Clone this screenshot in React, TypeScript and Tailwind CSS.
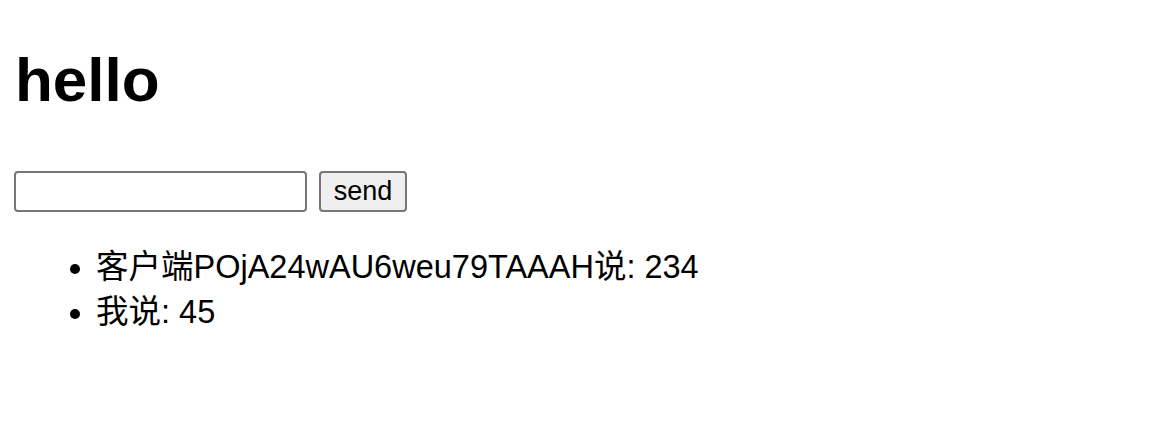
export default function App() {
  return (
    <div className="min-h-screen bg-white text-black pt-[43px] pl-[14px]" style={{ fontFamily: '"Liberation Sans", "Noto Sans CJK SC", sans-serif' }}>
      <h1 className="text-[62px] font-bold leading-[74px] pl-[1px]">hello</h1>

      <div className="flex items-center gap-[12px] mt-[54px]">
        <input
          type="text"
          className="w-[293px] h-[41px] border-2 border-[#767676] rounded-[4px] bg-white px-2 text-[26px] outline-none"
        />
        <button className="w-[88px] h-[41px] border-2 border-[#767676] rounded-[4px] bg-[#efefef] text-[27px] leading-none text-black">
          send
        </button>
      </div>

      <ul className="list-disc pl-[82px] mt-[33px] text-[32.5px] leading-[45px]">
        <li>客户端POjA24wAU6weu79TAAAH说: 234</li>
        <li>我说: 45</li>
      </ul>
    </div>
  );
}
